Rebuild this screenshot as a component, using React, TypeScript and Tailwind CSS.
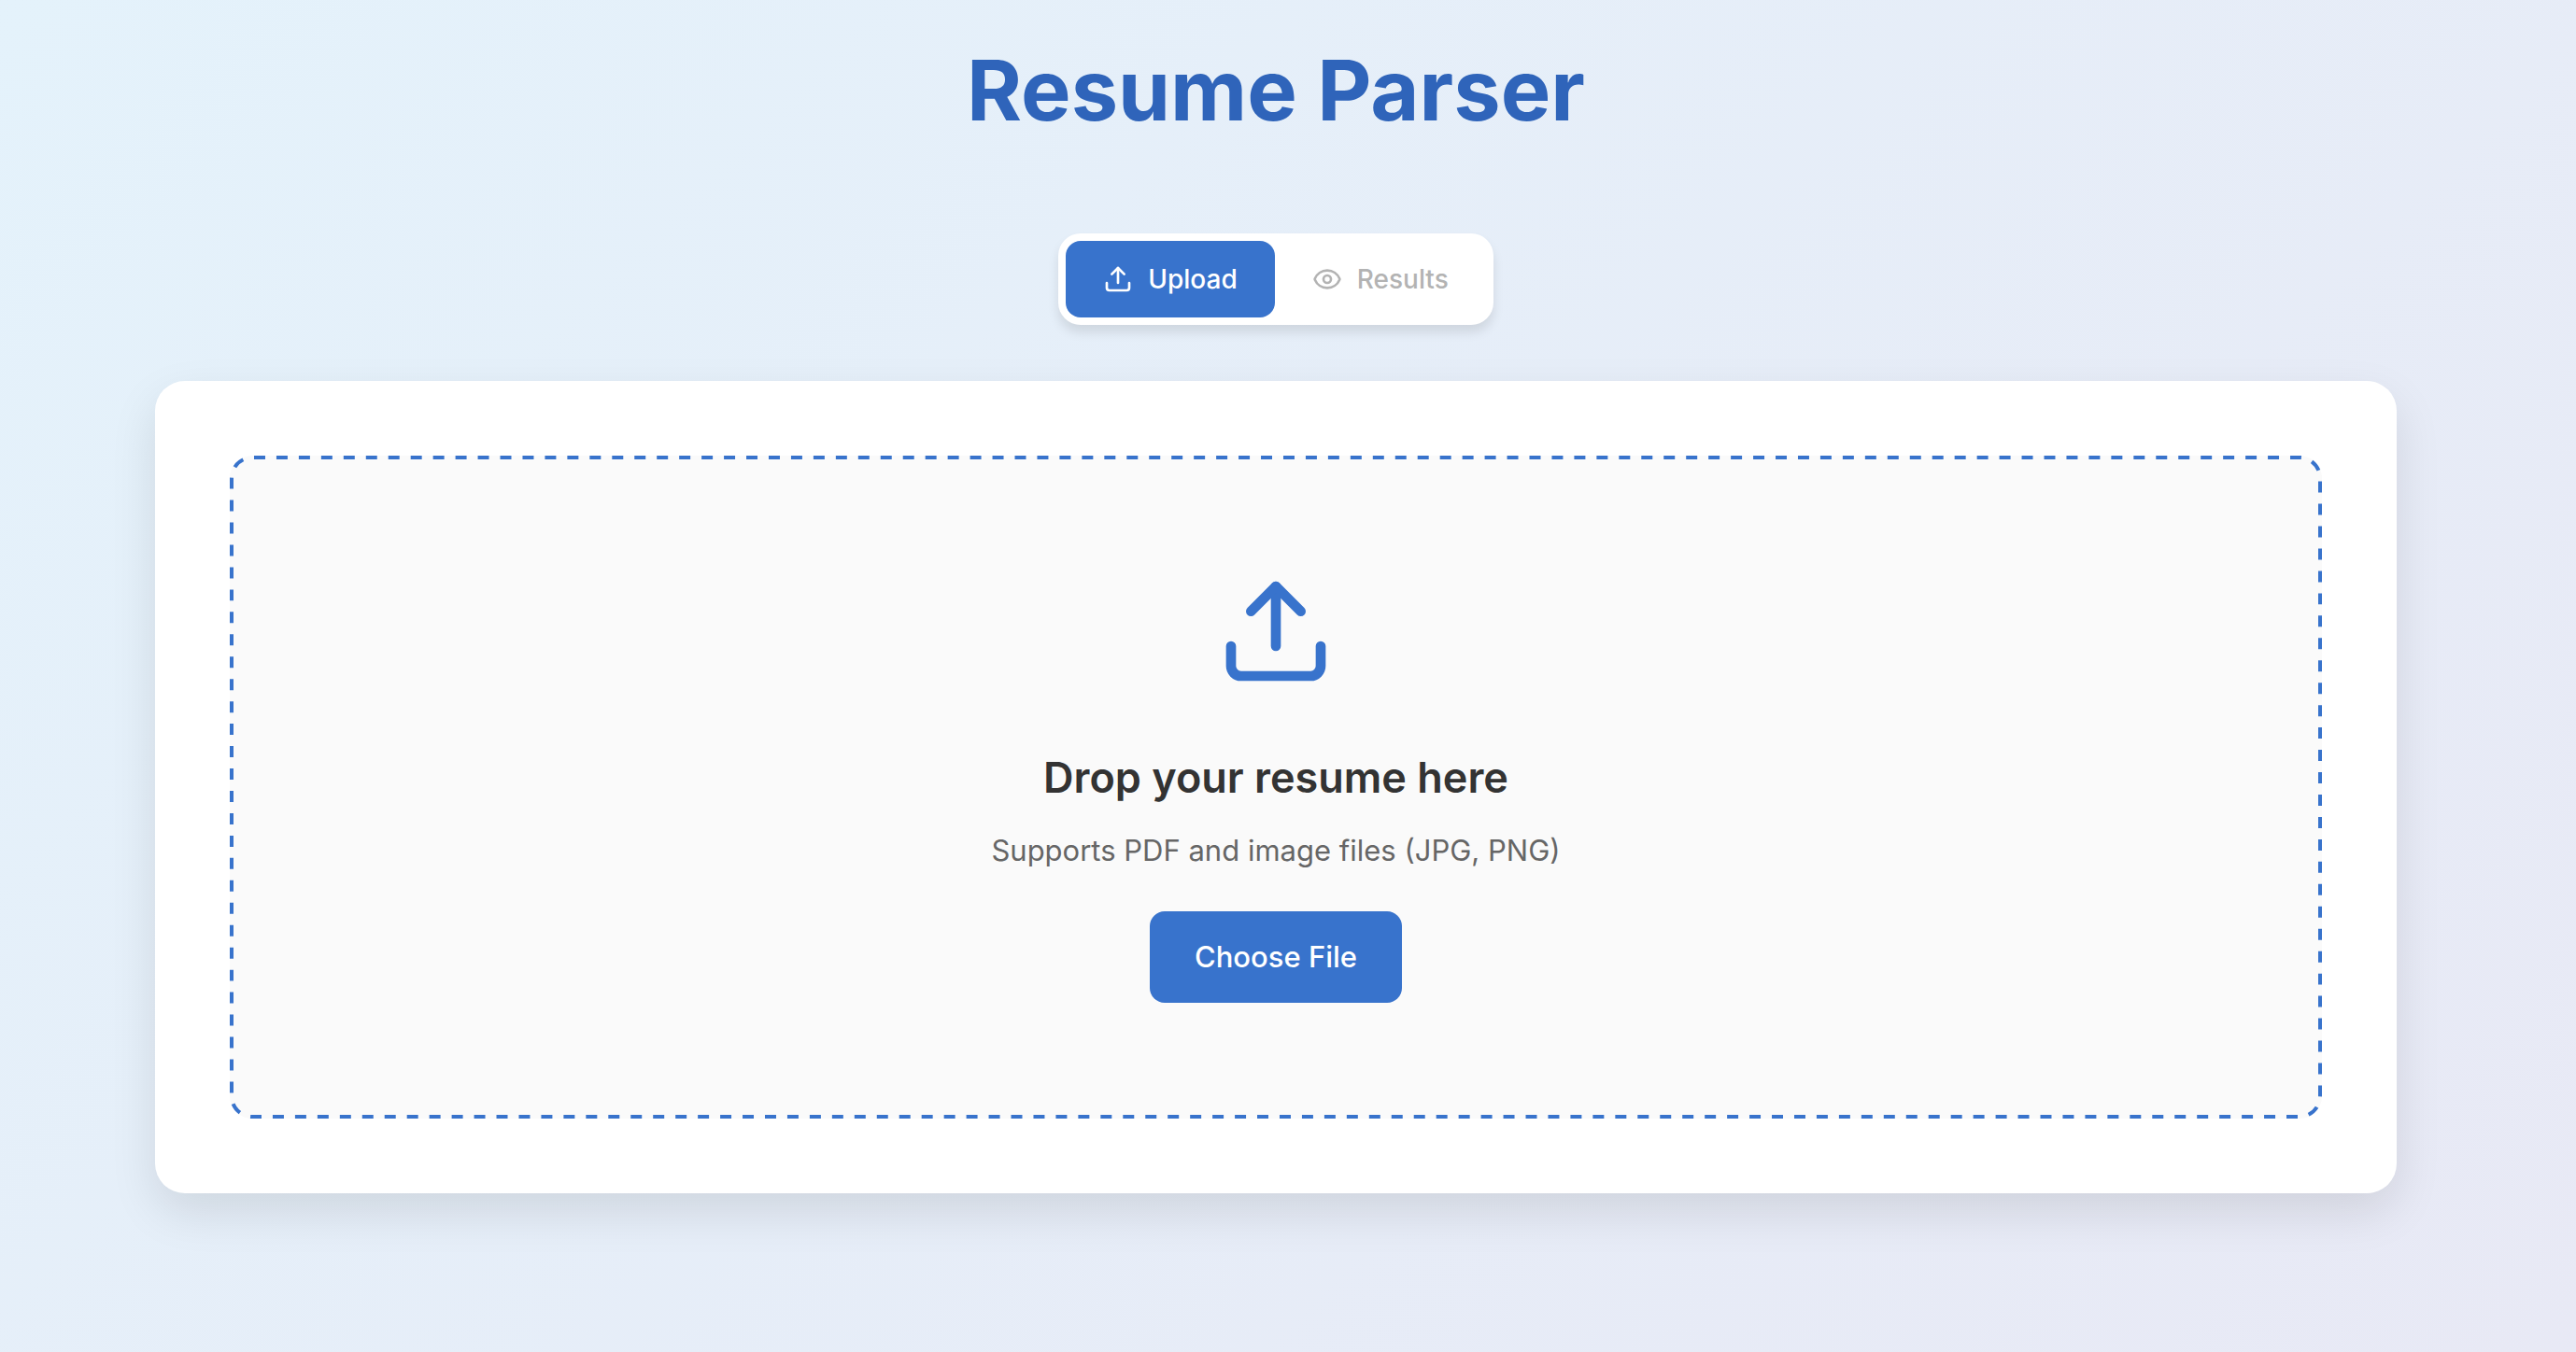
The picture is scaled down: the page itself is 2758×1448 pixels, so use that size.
import React, { useRef } from "react";
import { Eye, Upload } from "lucide-react";

/* Evenly spaced dashes around the drop zone; the path length is a whole number of 24-unit dash periods. */
function DashedOutline() {
  return (
    <svg className="pointer-events-none absolute inset-0 size-full" aria-hidden="true">
      <rect
        x="2"
        y="2"
        rx="22"
        pathLength={5856}
        strokeDasharray="12 12"
        strokeDashoffset="-2"
        className="h-[calc(100%-4px)] w-[calc(100%-4px)] fill-none stroke-[#3873cc] stroke-4"
      />
    </svg>
  );
}

export default function App() {
  const fileInput = useRef<HTMLInputElement>(null);

  return (
    <div className="min-h-screen bg-linear-135 from-[#e4f2fb] to-[#e8e9f5] pt-8 pr-[26px] pb-[170px] font-['Inter',sans-serif]">
      <div className="mx-auto flex max-w-[2400px] flex-col items-center">
        <h1 className="text-[90px] leading-[130px] font-bold text-[#2f64ba]">Resume Parser</h1>

        <nav className="mt-[88px] flex rounded-3xl bg-white p-2 shadow-[0_8px_12px_rgba(0,0,0,0.1)]">
          <button type="button" className="flex h-[82px] items-center gap-4 rounded-2xl bg-[#3873cc] px-10 text-[28px] font-medium text-white">
            <Upload size={32} strokeWidth={2} aria-hidden="true" />
            Upload
          </button>
          <button type="button" disabled className="flex h-[82px] items-center gap-4 rounded-2xl px-10 text-[28px] font-medium text-[#b3b3b3]">
            <Eye size={32} strokeWidth={2} aria-hidden="true" />
            Results
          </button>
        </nav>

        <main className="mt-[60px] w-full rounded-[32px] bg-white p-20 shadow-[0_20px_50px_rgba(0,0,0,0.1)]">
          <section className="relative flex flex-col items-center rounded-3xl bg-[#fafafa] py-[124px]">
            <DashedOutline />
            <Upload size={128} strokeWidth={2} className="text-[#3873cc]" aria-hidden="true" />
            <h2 className="mt-16 text-[45px] leading-[58px] font-semibold text-[#333333]">Drop your resume here</h2>
            <p className="mt-[30px] text-[31px] leading-[38px] text-[#666666]">Supports PDF and image files (JPG, PNG)</p>
            <input ref={fileInput} type="file" accept=".pdf,.jpg,.jpeg,.png" aria-label="Resume file" className="hidden" />
            <button
              type="button"
              onClick={() => fileInput.current?.click()}
              className="mt-[46px] h-[98px] rounded-2xl bg-[#3873cc] px-12 text-[31px] font-medium text-white"
            >
              Choose File
            </button>
          </section>
        </main>
      </div>
    </div>
  );
}
